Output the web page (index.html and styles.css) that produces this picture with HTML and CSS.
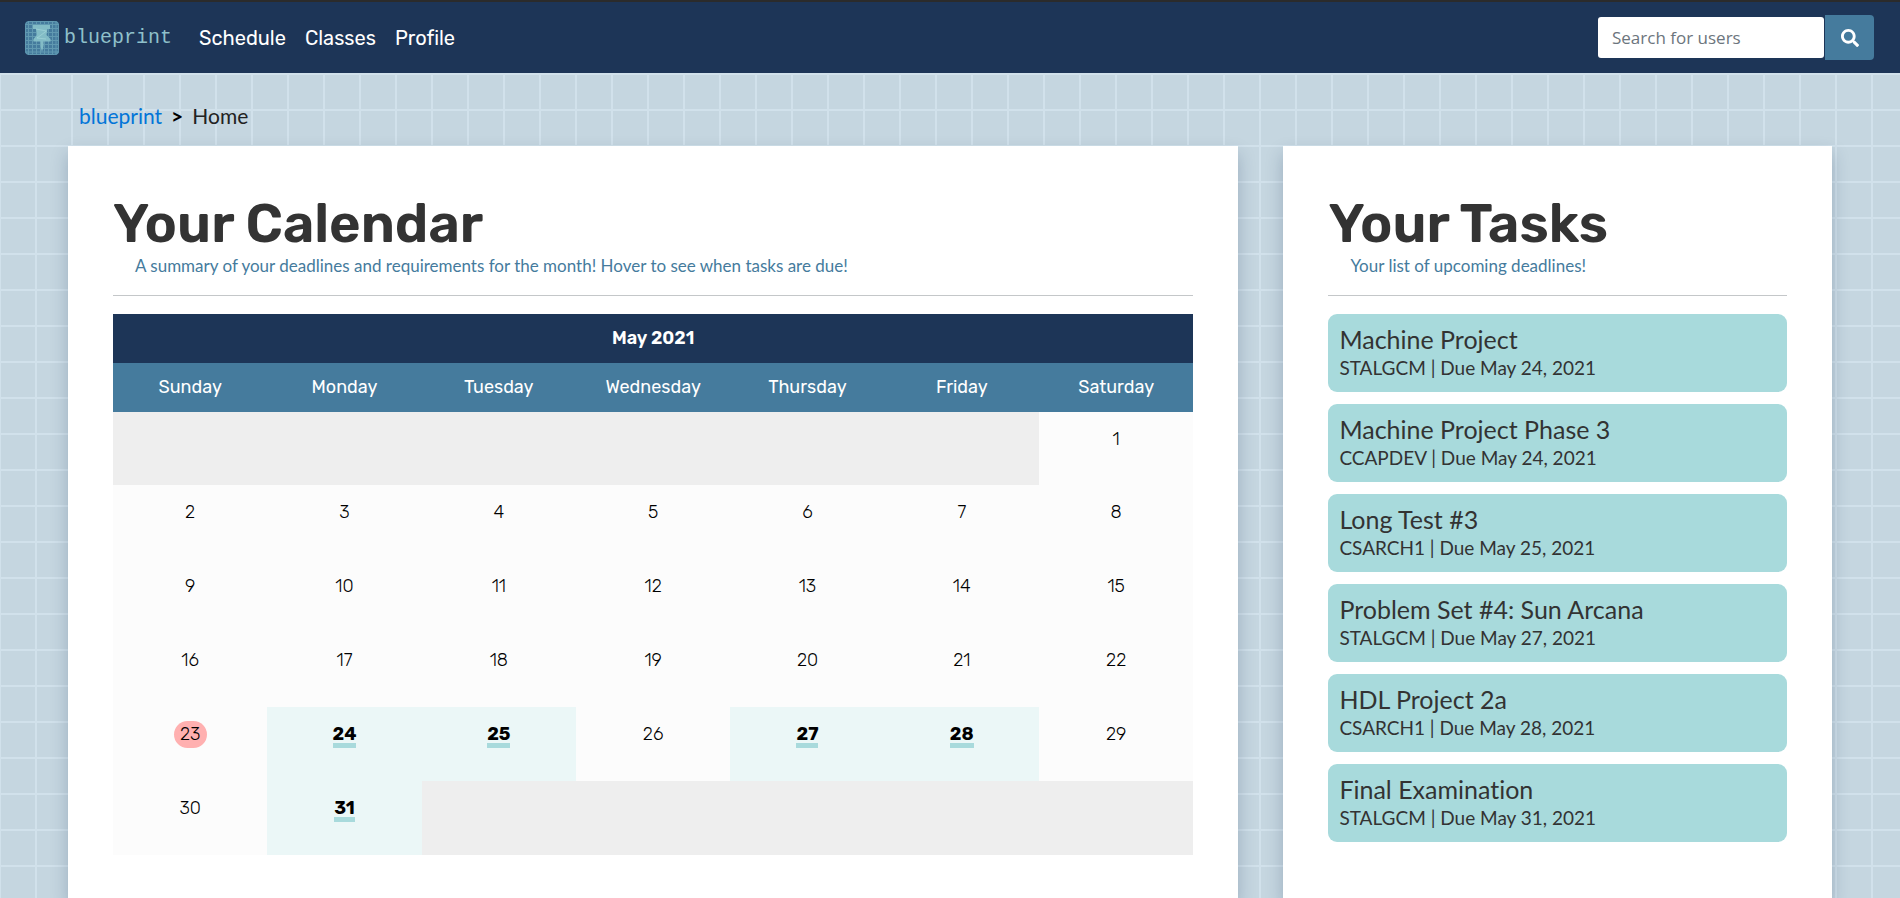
FILE: index.html
```html
<!DOCTYPE html>
<html lang="en">
<head>
<meta charset="utf-8">
<title>blueprint | Home</title>
<link rel="stylesheet" href="styles.css">
</head>
<body>
<header class="navbar">
  <a class="brand" href="#" aria-label="blueprint">
    <svg class="brand-mark" viewBox="0 0 34 34" aria-hidden="true">
      <rect width="34" height="34" rx="4" fill="#457b9d"/>
      <path d="M3.500 0V34M7.500 0V34M11.500 0V34M15.500 0V34M19.500 0V34M23.500 0V34M27.500 0V34M31 0V34M0 3.500H34M0 7.500H34M0 11.500H34M0 15.500H34M0 19.500H34M0 23.500H34M0 27.500H34M0 31H34" stroke="#6199b1" fill="none"/>
      <path d="M8 4H25V8H22.500L21.500 14L25.500 18V20.500H18.500V25L17 31L15.500 25V20.500H8.500V18L12 14L11 8H8Z" fill="#83bcc6"/>
      <path d="M11 8L21.500 10L12 17L21 18" stroke="#a8dadc" stroke-opacity=".6" fill="none"/>
      <rect x=".5" y=".5" width="33" height="33" rx="4" fill="none" stroke="#6199b1"/>
    </svg>
    <span class="brand-name">blueprint</span>
  </a>
  <nav class="nav-links">
    <a href="#">Schedule</a>
    <a href="#">Classes</a>
    <a href="#">Profile</a>
  </nav>
  <form class="search" role="search">
    <input class="search-input" type="search" placeholder="Search for users" aria-label="Search for users">
    <button class="search-button" type="submit" aria-label="Search">
      <svg viewBox="0 0 512 512" width="18" height="18" aria-hidden="true"><path fill="#fff" d="M505 442.700L405.300 343c-4.500-4.500-10.600-7-17-7H372c27.600-35.300 44-79.700 44-128C416 93.100 322.900 0 208 0S0 93.100 0 208s93.100 208 208 208c48.300 0 92.700-16.400 128-44v16.300c0 6.400 2.500 12.500 7 17l99.700 99.700c9.400 9.400 24.600 9.400 33.900 0l28.300-28.300c9.400-9.400 9.400-24.600.1-34zM208 336c-70.700 0-128-57.200-128-128 0-70.700 57.200-128 128-128 70.700 0 128 57.200 128 128 0 70.700-57.200 128-128 128z"/></svg>
    </button>
  </form>
</header>
<nav class="breadcrumb" aria-label="Breadcrumb">
  <a href="#">blueprint</a><span class="separator">&gt;</span><span>Home</span>
</nav>
<main class="board">
  <section class="card">
    <h1 class="title">Your Calendar</h1>
    <p class="subtitle">A summary of your deadlines and requirements for the month! Hover to see when tasks are due!</p>
    <table class="calendar">
      <thead>
        <tr class="month"><th colspan="7">May 2021</th></tr>
        <tr class="weekdays"><th>Sunday</th><th>Monday</th><th>Tuesday</th><th>Wednesday</th><th>Thursday</th><th>Friday</th><th>Saturday</th></tr>
      </thead>
      <tbody>
        <tr><td class="empty" colspan="6"></td><td>1</td></tr>
        <tr><td>2</td><td>3</td><td>4</td><td>5</td><td>6</td><td>7</td><td>8</td></tr>
        <tr><td>9</td><td>10</td><td>11</td><td>12</td><td>13</td><td>14</td><td>15</td></tr>
        <tr><td>16</td><td>17</td><td>18</td><td>19</td><td>20</td><td>21</td><td>22</td></tr>
        <tr><td><span class="today">23</span></td><td class="due"><span>24</span></td><td class="due"><span>25</span></td><td>26</td><td class="due"><span>27</span></td><td class="due"><span>28</span></td><td>29</td></tr>
        <tr><td>30</td><td class="due"><span>31</span></td><td class="empty" colspan="5"></td></tr>
      </tbody>
    </table>
  </section>
  <section class="card">
    <h1 class="title">Your Tasks</h1>
    <p class="subtitle">Your list of upcoming deadlines!</p>
    <ul class="tasks">
      <li class="task"><h2>Machine Project</h2><p>STALGCM | Due May 24, 2021</p></li>
      <li class="task"><h2>Machine Project Phase 3</h2><p>CCAPDEV | Due May 24, 2021</p></li>
      <li class="task"><h2>Long Test #3</h2><p>CSARCH1 | Due May 25, 2021</p></li>
      <li class="task"><h2>Problem Set #4: Sun Arcana</h2><p>STALGCM | Due May 27, 2021</p></li>
      <li class="task"><h2>HDL Project 2a</h2><p>CSARCH1 | Due May 28, 2021</p></li>
      <li class="task"><h2>Final Examination</h2><p>STALGCM | Due May 31, 2021</p></li>
    </ul>
  </section>
</main>
</body>
</html>
```

FILE: styles.css
```css
* { box-sizing: border-box; }

body {
  margin: 0;
  min-height: 100vh;
  display: flex;
  flex-direction: column;
  color: #333;
  font-family: Rubik, Roboto, "Liberation Sans", sans-serif;
  font-variant-ligatures: none;
  background-color: #c5d6e0;
  background-image:
    linear-gradient(#d1e1eb 2px, transparent 2px),
    linear-gradient(90deg, #d1e1eb 2px, transparent 2px);
  background-size: 36px 36px;
  background-position: -1px 1px;
}

a { text-decoration: none; }

.navbar {
  display: flex;
  align-items: center;
  height: 73px;
  padding: 0 26px 0 25px;
  background: #1d3557;
  border-top: 2px solid #2b2b2b;
}

.brand {
  display: flex;
  align-items: center;
  gap: 5px;
  color: #8fc0ca;
}

.brand-mark { width: 34px; height: 34px; }

.brand-name {
  font-family: "Liberation Mono", monospace;
  font-size: 20px;
}

.nav-links {
  display: flex;
  gap: 19px;
  margin-left: 27px;
}

.nav-links a {
  color: #fff;
  font-size: 20px;
  font-weight: 400;
}

.search {
  display: flex;
  align-items: center;
  gap: 1px;
  margin-left: auto;
}

.search-input {
  width: 226px;
  height: 41px;
  padding: 0 14px;
  border: 0;
  border-radius: 3px;
  background: #fff;
  font-family: "Open Sans", "Noto Sans", sans-serif;
  font-size: 17px;
}

.search-input::placeholder { color: #6c757d; }

.search-button {
  display: grid;
  place-items: center;
  width: 49px;
  height: 45px;
  padding: 0;
  border: 0;
  border-radius: 0 4px 4px 0;
  background: #457b9d;
}

.breadcrumb {
  display: flex;
  align-items: center;
  height: 73px;
  padding: 12px 79px 0;
  color: #222;
  font-family: Lato, sans-serif;
  font-size: 21px;
}

.breadcrumb a { color: #0275d8; }

.separator {
  margin: 0 9px;
  color: #000;
  font-weight: 700;
}

.board {
  flex: 1;
  display: grid;
  grid-template-columns: 32fr 15fr;
  gap: 45px;
  padding: 0 68px;
}

.card {
  padding: 48px 45px 0;
  background: #fff;
  box-shadow: 0 8px 16px rgba(29, 53, 87, 0.25);
}

.title {
  margin: 0;
  font-size: 54px;
  font-weight: 600;
  line-height: 61px;
}

.subtitle {
  margin: 0 0 18px;
  padding: 0 22px 18px;
  border-bottom: 1px solid #c4c7c9;
  color: #457b9d;
  font-family: Lato, sans-serif;
  font-size: 17px;
  line-height: 22px;
}

.calendar {
  width: 100%;
  table-layout: fixed;
  border-collapse: collapse;
  color: #000;
  font-size: 18px;
  line-height: 27px;
  text-align: center;
}

.calendar th {
  height: 49px;
  padding: 0;
  color: #fff;
  font-weight: 600;
}

.calendar .month { background: #1d3557; }
.calendar .weekdays { background: #457b9d; }
.calendar .weekdays th { font-weight: 400; }

.calendar td {
  height: 74px;
  padding: 14px 0 0;
  background: #fcfcfc;
  font-weight: 300;
  vertical-align: top;
}

.calendar tbody tr:first-child td { height: 73px; }

.calendar .empty { background: #eee; }

.calendar .due {
  background: #ebf7f7;
  font-weight: 700;
}

.due span {
  display: inline-block;
  height: 27px;
  border-bottom: 5px solid #a8dadc;
}

.today {
  display: inline-block;
  width: 33px;
  border-radius: 14px;
  background: #ffb0b0;
}

.tasks {
  display: grid;
  gap: 12px;
  margin: 0;
  padding: 0;
  list-style: none;
}

.task {
  height: 78px;
  padding: 10px 11px;
  border-radius: 9px;
  background: #a8dadc;
  font-family: Lato, sans-serif;
}

.task h2 {
  margin: 0;
  font-size: 25px;
  font-weight: 400;
  line-height: 30px;
}

.task p {
  margin: 0;
  font-size: 19px;
  line-height: 27px;
}
```
